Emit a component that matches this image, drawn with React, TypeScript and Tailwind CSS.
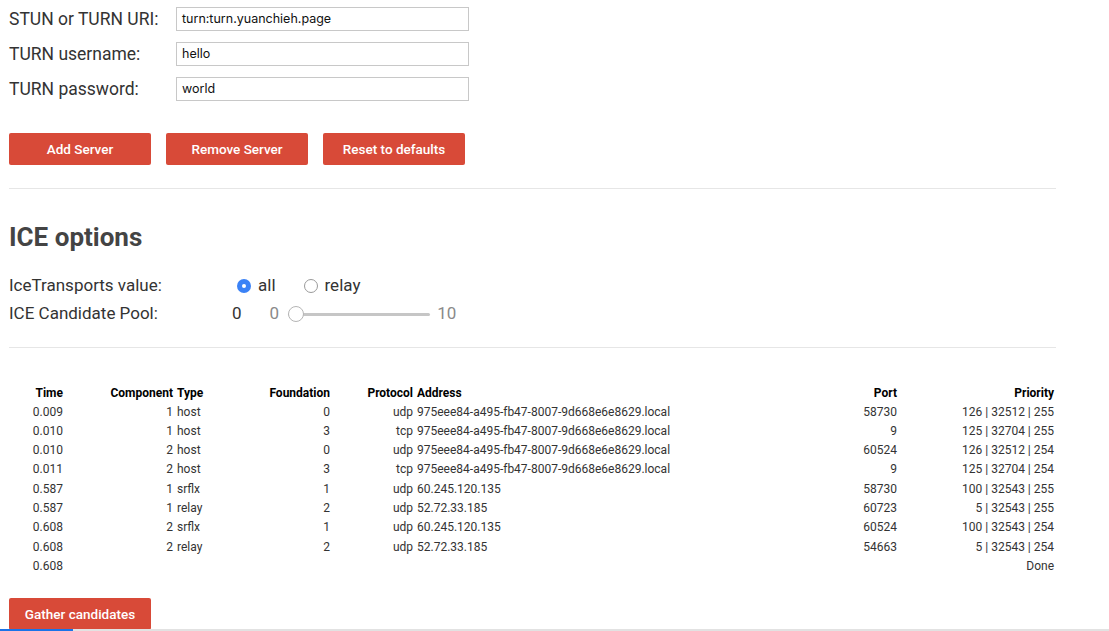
import React from "react";

const rows = [
  ["0.009", "1", "host", "0", "udp", "975eee84-a495-fb47-8007-9d668e6e8629.local", "58730", "126 | 32512 | 255"],
  ["0.010", "1", "host", "3", "tcp", "975eee84-a495-fb47-8007-9d668e6e8629.local", "9", "125 | 32704 | 255"],
  ["0.010", "2", "host", "0", "udp", "975eee84-a495-fb47-8007-9d668e6e8629.local", "60524", "126 | 32512 | 254"],
  ["0.011", "2", "host", "3", "tcp", "975eee84-a495-fb47-8007-9d668e6e8629.local", "9", "125 | 32704 | 254"],
  ["0.587", "1", "srflx", "1", "udp", "60.245.120.135", "58730", "100 | 32543 | 255"],
  ["0.587", "1", "relay", "2", "udp", "52.72.33.185", "60723", "5 | 32543 | 255"],
  ["0.608", "2", "srflx", "1", "udp", "60.245.120.135", "60524", "100 | 32543 | 254"],
  ["0.608", "2", "relay", "2", "udp", "52.72.33.185", "54663", "5 | 32543 | 254"],
  ["0.608", "", "", "", "", "", "", "Done"],
];

function Field({ label, value }: { label: string; value: string }) {
  return (
    <div className="flex items-center h-[35px]">
      <div className="w-[167px] text-[17.5px] text-[#333]">{label}</div>
      <div className="w-[293px] h-[24px] border border-[#c8c8c8] flex items-center px-[5px] text-[12.5px] text-[#111] font-['Inter',sans-serif]">
        {value}
      </div>
    </div>
  );
}

function Btn({ children }: { children: React.ReactNode }) {
  return (
    <div className="w-[142px] h-[32px] bg-[#d84a38] rounded-[2px] flex items-center justify-center text-white text-[13.5px] font-medium">
      {children}
    </div>
  );
}

export default function App() {
  return (
    <div className="bg-white min-h-[631px] font-['Roboto',sans-serif] text-[#333]">
      <div className="pl-[9px] pt-[1.5px] w-[1056px]">
        <Field label="STUN or TURN URI:" value="turn:turn.yuanchieh.page" />
        <Field label="TURN username:" value="hello" />
        <Field label="TURN password:" value="world" />

        <div className="flex gap-[15px] mt-[26.5px]">
          <Btn>Add Server</Btn>
          <Btn>Remove Server</Btn>
          <Btn>Reset to defaults</Btn>
        </div>

        <div className="h-px bg-[#e6e6e6] mt-[23px]" />

        <h2 className="mt-[33px] text-[26px] leading-[30px] font-bold text-[#444]">ICE options</h2>

        <div className="flex items-center h-[28px] mt-[20px] text-[17px]">
          <div className="w-[228px]">IceTransports value:</div>
          <div className="w-[14px] h-[14px] rounded-full bg-[#3b82f6] flex items-center justify-center">
            <div className="w-[4px] h-[4px] rounded-full bg-white" />
          </div>
          <span className="ml-[7px]">all</span>
          <div className="ml-[28px] w-[14px] h-[14px] rounded-full border border-[#9a9a9a] bg-white" />
          <span className="ml-[7px]">relay</span>
        </div>

        <div className="flex items-center h-[28px] text-[17px]">
          <div className="w-[223px]">ICE Candidate Pool:</div>
          <span className="text-[#333]">0</span>
          <span className="ml-[28px] text-[#8a8a8a]">0</span>
          <div className="relative ml-[9px] w-[142px] h-[16px] flex items-center">
            <div className="w-full h-[3px] bg-[#c6c6c6] rounded-full" />
            <div className="absolute left-0 top-[0px] w-[16px] h-[16px] rounded-full bg-white border border-[#b5b5b5]" />
          </div>
          <span className="ml-[7px] text-[#8a8a8a]">10</span>
        </div>

        <div className="h-px bg-[#e6e6e6] mt-[19px]" />

        <table className="mt-[34.5px] table-fixed w-[1047px] text-[12px] border-collapse">
          <thead>
            <tr className="leading-[20px] text-black font-bold">
              <th className="w-[56px] px-[2px] text-right">Time</th>
              <th className="w-[110px] px-[2px] text-right">Component</th>
              <th className="w-[90px] px-[2px] text-left">Type</th>
              <th className="w-[67px] px-[2px] text-right">Foundation</th>
              <th className="w-[83px] px-[2px] text-right">Protocol</th>
              <th className="w-[435px] px-[2px] text-left">Address</th>
              <th className="w-[49px] px-[2px] text-right">Port</th>
              <th className="w-[157px] px-[2px] text-right">Priority</th>
            </tr>
          </thead>
          <tbody>
            {rows.map((r, i) => (
              <tr key={i} className="leading-[19.3px] text-[#333]">
                <td className="px-[2px] text-right">{r[0]}</td>
                <td className="px-[2px] text-right">{r[1]}</td>
                <td className="px-[2px] text-left">{r[2]}</td>
                <td className="px-[2px] text-right">{r[3]}</td>
                <td className="px-[2px] text-right">{r[4]}</td>
                <td className="px-[2px] text-left whitespace-nowrap">{r[5]}</td>
                <td className="px-[2px] text-right">{r[6]}</td>
                <td className="px-[2px] text-right">{r[7]}</td>
              </tr>
            ))}
          </tbody>
        </table>

        <div className="mt-[21.5px]">
          <Btn>Gather candidates</Btn>
        </div>
      </div>

      <div className="fixed left-0 right-0 bottom-0 h-[2px] bg-[#e2e2e2]">
        <div className="h-full w-[73px] bg-[#1a73e8]" />
      </div>
    </div>
  );
}
